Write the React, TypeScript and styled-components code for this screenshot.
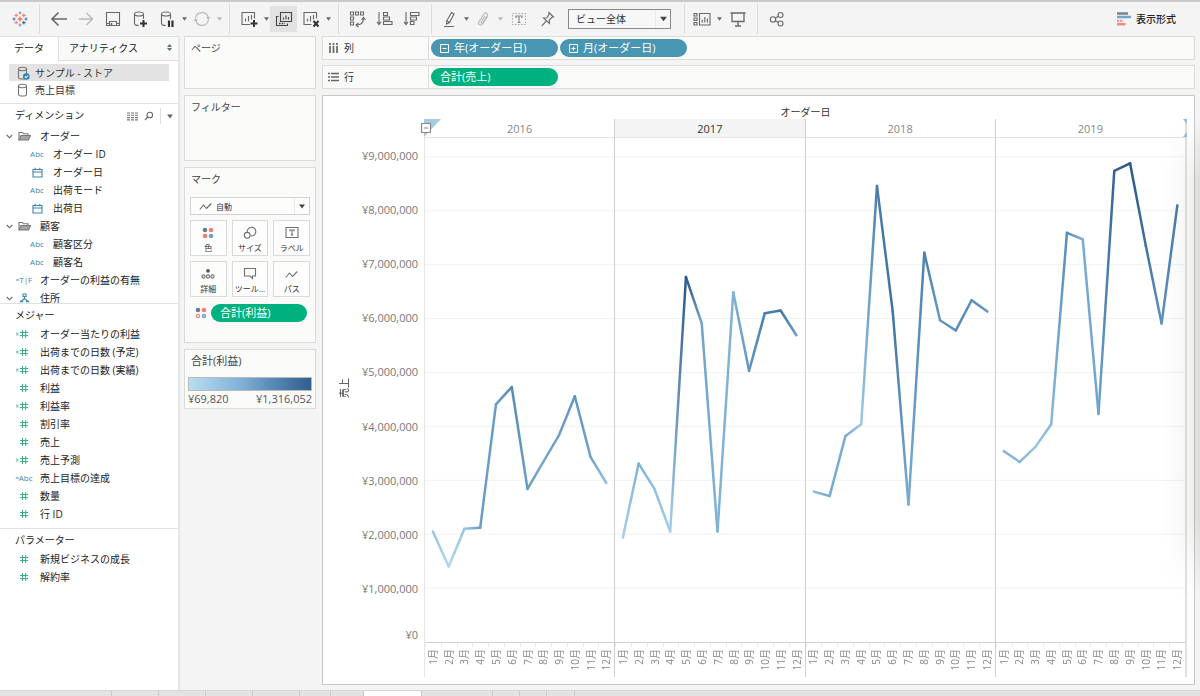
import React from "react";
import styled, { createGlobalStyle, css } from "styled-components";

const Global = createGlobalStyle`
  *, *::before, *::after { box-sizing: border-box; }
  body {
    margin: 0;
    background: #f4f4f4;
    color: #333;
    font: 10px/18px "Open Sans", "Noto Sans CJK JP", sans-serif;
  }
  button, select { font: inherit; color: inherit; }
  h2, ul { margin: 0; padding: 0; font-size: inherit; font-weight: 400; list-style: none; }
`;

/* ---------- page frame ---------- */

const Page = styled.div`
  position: relative;
  display: flex;
  flex-direction: column;
  min-height: 100vh;
  overflow: hidden;
  border-top: 2px solid #cacaca;
`;

const Workspace = styled.div`
  display: flex;
  flex: 1;
`;

const WindowShade = styled.div`
  position: absolute;
  top: 118px;
  right: 0;
  bottom: 98px;
  width: 36px;
  pointer-events: none;
  background: linear-gradient(to right, rgba(90, 90, 80, 0), rgba(90, 90, 80, 0.05) 60%, rgba(90, 90, 80, 0.14));
  mask-image: linear-gradient(transparent, #000 12%, #000 84%, transparent);
`;

/* ---------- toolbar ---------- */

const Toolbar = styled.header`
  display: flex;
  align-items: center;
  height: 34px;
  padding: 2px 24px 2px 1px;
`;

const Group = styled.div<{ $first?: boolean; $spaced?: boolean }>`
  display: flex;
  align-items: center;
  gap: ${(p) => (p.$spaced ? 1 : 0)}px;
  height: 30px;
  padding: 0 6px 0 5px;
  border-left: ${(p) => (p.$first ? "0" : "1px solid #dcdcdc")};
`;

const ToolButton = styled.button<{ $narrow?: boolean; $active?: boolean; $muted?: boolean }>`
  display: flex;
  align-items: center;
  justify-content: center;
  width: ${(p) => (p.$narrow ? 24 : 27)}px;
  height: 26px;
  padding: 0;
  border: 0;
  background: ${(p) => (p.$active ? "#e2e2e2" : "transparent")};
  color: ${(p) => (p.$muted ? "#b8b8b8" : "#686868")};
`;

const CaretButton = styled.button<{ $muted?: boolean }>`
  display: flex;
  align-items: center;
  justify-content: center;
  width: 8px;
  height: 26px;
  padding: 0;
  border: 0;
  background: none;
  color: ${(p) => (p.$muted ? "#b8b8b8" : "#686868")};
`;

const SelectBox = styled.div<{ $marks?: boolean }>`
  position: relative;
  display: flex;
  align-items: center;
  height: ${(p) => (p.$marks ? 18 : 20)}px;
  width: ${(p) => (p.$marks ? "100%" : "103px")};
  margin: ${(p) => (p.$marks ? "0" : "0 13px 0 2px")};
  border: 1px solid ${(p) => (p.$marks ? "#d2d2d2" : "#8a8a8a")};
  background: ${(p) => (p.$marks ? "#fdfdfd" : "#f7f7f7")};
  color: #666;
  select {
    appearance: none;
    width: 100%;
    height: 100%;
    border: 0;
    outline: 0;
    background: none;
    font-size: ${(p) => (p.$marks ? 8 : 10)}px;
    padding: 0 16px 0 ${(p) => (p.$marks ? 25 : 7)}px;
    color: #333;
  }
`;

const SelectCaret = styled.span`
  position: absolute;
  top: 0;
  right: 0;
  bottom: 0;
  display: flex;
  align-items: center;
  justify-content: center;
  width: 15px;
  border-left: 1px solid #e8e8e8;
  color: #444;
  pointer-events: none;
`;

const SelectGlyph = styled.span`
  position: absolute;
  left: 8px;
  display: flex;
  pointer-events: none;
`;

const ShowMe = styled.button`
  display: flex;
  align-items: center;
  gap: 5px;
  margin-left: auto;
  padding: 0;
  border: 0;
  background: none;
  font-weight: 500;
  color: #222;
`;

/* ---------- data pane ---------- */

const Sidebar = styled.aside`
  width: 180px;
  flex: none;
  background: #fff;
  border-right: 2px solid #e6e6e6;
`;

const PaneTabs = styled.div`
  display: flex;
  height: 25px;
`;

const PaneTab = styled.button<{ $current?: boolean }>`
  display: flex;
  align-items: center;
  justify-content: space-between;
  height: 25px;
  border: 0;
  color: #222;
  ${(p) =>
    p.$current
      ? css`
          width: 58px;
          padding: 0 0 2px 14px;
          background: #fff;
          border-top: 1px solid #e0e0e0;
        `
      : css`
          flex: 1;
          padding: 0 6px 2px 10px;
          background: #f9f9f8;
          border: 1px solid #dedede;
          border-right: 0;
        `}
`;

const Sources = styled.ul`
  padding: 3px 9px 5px;
`;

const Source = styled.li<{ $selected?: boolean }>`
  display: flex;
  align-items: center;
  gap: 5px;
  height: 17px;
  padding-left: 8px;
  background: ${(p) => (p.$selected ? "#e3e3e3" : "transparent")};
`;

const Section = styled.section`
  border-top: 1px solid #e2e2e2;
`;

const SectionHead = styled.div`
  display: flex;
  align-items: center;
  justify-content: space-between;
  height: 21px;
  padding-left: 15px;
  color: #222;
`;

const HeadTools = styled.div`
  display: flex;
  align-items: center;
  gap: 6px;
  padding: 3px 5px 0 0;
`;

const HeadButton = styled.button<{ $split?: boolean }>`
  display: flex;
  align-items: center;
  height: 16px;
  padding: 0 0 0 ${(p) => (p.$split ? 6 : 0)}px;
  border: 0;
  border-left: ${(p) => (p.$split ? "1px solid #dedede" : "0")};
  background: none;
  color: #666;
`;

const Fields = styled.ul<{ $capped?: boolean }>`
  padding-bottom: 5px;
  ${(p) =>
    p.$capped &&
    css`
      max-height: 178px;
      padding: 2px 0 0;
    `}
`;

const Field = styled.li<{ $nested?: boolean }>`
  display: flex;
  align-items: center;
  height: 18px;
  padding-left: ${(p) => (p.$nested ? 16 : 3)}px;
  line-height: 14px;
  white-space: nowrap;
  color: #222;
`;

const Chevron = styled.span`
  display: flex;
  justify-content: center;
  width: 12px;
  color: #666;
`;

const FieldIcon = styled.span<{ $measure?: boolean }>`
  display: flex;
  align-items: center;
  justify-content: center;
  width: 18px;
  margin-right: 7px;
  font-size: 8px;
  color: ${(p) => (p.$measure ? "#3dab86" : "#3d86ad")};
`;

const CalcMark = styled.span`
  font-size: 6px;
`;

/* ---------- cards and shelves ---------- */

const Cards = styled.div`
  display: flex;
  flex-direction: column;
  gap: 6px;
  width: 142px;
  flex: none;
  padding: 0 6px 6px 4px;
`;

const Card = styled.section<{ $min: number }>`
  min-height: ${(p) => p.$min}px;
  padding: 2px 5px 0;
  border: 1px solid #dadada;
  background: #fafaf9;
  color: #444;
`;

const CardTitle = styled.h2<{ $large?: boolean }>`
  padding-left: 1px;
  font-size: ${(p) => (p.$large ? 11 : 10)}px;
`;

const MarkSelectRow = styled.div`
  padding-top: 9px;
`;

const MarkTools = styled.div`
  display: grid;
  grid-template-columns: repeat(3, 1fr);
  gap: 5px;
  margin: 5px 0 6px;
`;

const MarkButton = styled.button`
  display: flex;
  flex-direction: column;
  align-items: center;
  justify-content: flex-end;
  gap: 2px;
  height: 36px;
  padding: 0;
  border: 1px solid #dadada;
  background: #fdfdfd;
  font-size: 8px;
  line-height: 14px;
  color: #333;
  svg { color: #707070; }
`;

const MarkPillRow = styled.div`
  display: flex;
  align-items: center;
  gap: 4px;
  padding: 1px 3px 0 5px;
`;

const Pill = styled.button<{ $measure?: boolean; $fill?: boolean }>`
  display: flex;
  align-items: center;
  gap: 5px;
  ${(p) => (p.$fill ? "flex: 1;" : "width: 127px;")}
  height: 18px;
  padding: 0 9px;
  border: 0;
  border-radius: 9px;
  background: ${(p) => (p.$measure ? "#00b180" : "#4996b2")};
  font-size: 11px;
  line-height: 18px;
  color: #fff;
`;

const LegendBar = styled.div`
  height: 14px;
  margin: 7px -2px 0;
  border: 1px solid #b9b9b9;
  background: linear-gradient(to right, #b9ddf1, #84b4d8 40%, #4f81b0 75%, #335d8e);
`;

const LegendRange = styled.div`
  display: flex;
  justify-content: space-between;
  margin: 0 -2px;
  font-size: 11px;
  line-height: 16px;
  color: #555;
`;

const Main = styled.main`
  display: flex;
  flex: 1;
  flex-direction: column;
  gap: 5px;
  min-width: 0;
  padding: 0 5px 5px 0;
`;

const Shelf = styled.div`
  display: flex;
  align-items: center;
  height: 24px;
  border: 1px solid #dcdcdc;
  background: #fafaf9;
`;

const ShelfName = styled.div`
  display: flex;
  align-items: center;
  gap: 5px;
  width: 106px;
  height: 100%;
  padding-left: 5px;
  border-right: 1px solid #dcdcdc;
  color: #333;
  svg { color: #666; }
`;

const ShelfPills = styled.div`
  display: flex;
  gap: 2px;
  padding-left: 2px;
`;

/* ---------- view ---------- */

const View = styled.section`
  display: flex;
  flex: 1;
  margin-top: 1px;
  padding: 7px 7px 7px 0;
  border: 1px solid #c8c8c8;
  background: #fff;
`;

const AxisTitle = styled.div`
  align-self: center;
  width: 14px;
  margin: 0 0 4px 14px;
  writing-mode: vertical-rl;
  text-orientation: sideways;
  transform: rotate(180deg);
  line-height: 14px;
  color: #333;
`;

const AxisLabels = styled.div`
  display: grid;
  grid-template-rows: minmax(0, 0.35fr) repeat(9, minmax(0, 1fr));
  width: 73px;
  padding: 34px 6px 34px 0;
  font-size: 11px;
  line-height: 16px;
  text-align: right;
  color: #777;
`;

const AxisLabel = styled.span<{ $last?: boolean }>`
  align-self: end;
  margin-bottom: ${(p) => (p.$last ? 0 : -8)}px;
`;

const Plot = styled.div`
  position: relative;
  display: flex;
  flex: 1;
  flex-direction: column;
  min-width: 0;
`;

const PlotTitle = styled.h2`
  height: 16px;
  line-height: 18px;
  text-align: center;
  color: #333;
`;

const Panes = styled.div`
  display: grid;
  flex: 1;
  grid-template-columns: repeat(4, minmax(0, 1fr));
  border-right: 2px solid #e0e0e0;
`;

const Pane = styled.div<{ $first?: boolean }>`
  display: flex;
  flex-direction: column;
  border-left: 1px solid ${(p) => (p.$first ? "#e6e6e6" : "#cfcfcf")};
`;

const PaneHead = styled.div<{ $hover?: boolean }>`
  height: 19px;
  border-bottom: 1px solid #e2e2e2;
  background: ${(p) => (p.$hover ? "#f4f4f4" : "transparent")};
  font-size: 11px;
  line-height: 19px;
  text-align: center;
  color: ${(p) => (p.$hover ? "#333" : "#888")};
`;

const PaneChart = styled.svg`
  display: block;
  flex: 1 1 0;
  width: 100%;
  min-height: 200px;
  overflow: visible;
`;

const Months = styled.div`
  display: grid;
  grid-template-columns: repeat(12, minmax(0, 1fr));
  height: 35px;
  border-top: 1px solid #d2d2d2;
`;

const Month = styled.span`
  display: flex;
  justify-content: center;
  padding-top: 6px;
  background: linear-gradient(#ececec, #ececec) no-repeat 0 0 / 1px 4px;
  line-height: 14px;
  color: #888;
  span {
    height: max-content;
    writing-mode: vertical-rl;
    text-orientation: sideways;
    transform: rotate(180deg);
  }
`;

const CornerMark = styled.svg<{ $end?: boolean }>`
  position: absolute;
  top: 16px;
  ${(p) => (p.$end ? "right: 0;" : "left: 0;")}
`;

const Collapse = styled.button`
  position: absolute;
  top: 20px;
  left: -3px;
  display: flex;
  padding: 0;
  border: 0;
  background: #fff;
  color: #888;
`;

/* ---------- sheet tabs ---------- */

const SheetTabs = styled.footer`
  display: flex;
  height: 6px;
  border-top: 1px solid #d6d6d6;
  background: #e3e3e3;
`;

const SheetTab = styled.button<{ $w: number; $current?: boolean }>`
  width: ${(p) => p.$w}px;
  padding: 0;
  border: 0;
  border-right: 1px solid #c8c8c8;
  background: ${(p) => (p.$current ? "#fff" : "transparent")};
`;

/* ---------- icons ---------- */

const Svg = ({ w = 18, h = 18, children }: { w?: number; h?: number; children: React.ReactNode }) => (
  <svg width={w} height={h} viewBox={`0 0 ${w} ${h}`} fill="none" stroke="currentColor" strokeWidth="1.1" aria-hidden="true">
    {children}
  </svg>
);

const Caret = ({ size = 5 }: { size?: number }) => (
  <svg width={size} height={size - 1} viewBox="0 0 6 4" aria-hidden="true">
    <path d="M0 0h6L3 4z" fill="currentColor" />
  </svg>
);

const plus = (x: number, y: number, r: number) => `M${x - r} ${y}h${2 * r}M${x} ${y - r}v${2 * r}`;

const Logo = () => (
  <Svg w={16} h={16}>
    <path d={plus(8, 8, 2.4)} stroke="#e8745c" strokeWidth="1.3" />
    <path d={plus(4.2, 4.4, 1.8) + plus(4.2, 11.6, 1.8)} stroke="#ef8a7a" />
    <path d={plus(11.8, 4.4, 1.8)} stroke="#f0806e" />
    <path d={plus(11.8, 11.6, 1.8)} stroke="#3f6798" />
    <path d={plus(8, 2, 1.5) + plus(8, 14, 1.5)} stroke="#6a9cc4" />
    <path d={plus(2, 8, 1.4) + plus(14, 8, 1.4)} stroke="#4c6c9a" />
  </Svg>
);

const Back = () => (
  <Svg>
    <path d="M17 9H2.500M8.500 2.500L2 9l6.500 6.500" strokeWidth="1.6" />
  </Svg>
);
const Forward = () => (
  <Svg>
    <path d="M2 9h13.500M9.500 3L15.500 9l-6 6" strokeWidth="1.3" />
  </Svg>
);
const Save = () => (
  <Svg>
    <path d="M2.500 2.500h13v13h-13zM5.500 15.500v-4h7v4M2.500 13.500h3M12.500 13.500h3" />
    <path d="M7.500 13v2.500" strokeWidth="1.6" />
  </Svg>
);
const cylinder = "M3.500 4v9.500c0 1.200 1.900 2 4.300 2M12.500 4v5M3.500 4c0-1.200 2-2 4.500-2s4.500.8 4.500 2-2 2-4.500 2-4.500-.8-4.500-2z";
const DbAdd = () => (
  <Svg>
    <path d={cylinder} />
    <path d="M9 13.500h7M12.500 10v7" strokeWidth="2" stroke="#333" />
  </Svg>
);
const DbPause = () => (
  <Svg>
    <path d={cylinder} />
    <path d="M11 10.500v6.500M14.500 10.500v6.500" strokeWidth="2.200" stroke="#333" />
  </Svg>
);
const Refresh = () => (
  <Svg>
    <path d="M2.600 8A6.500 6.500 0 0 1 15.300 7.500M15.400 10A6.500 6.500 0 0 1 2.700 10.500" />
    <path d="M13.200 7h4L15.500 10zM.8 11L2.700 8l2.100 3z" fill="currentColor" stroke="none" />
  </Svg>
);
const NewSheet = () => (
  <Svg>
    <path d="M14.500 8.500V2.500h-12.500v12h8M5.500 11.500v-3M8.500 11.500V6M11.500 9.500V5" />
    <path d="M10.500 13.500h7M14 10v7" strokeWidth="2" stroke="#333" />
  </Svg>
);
const Duplicate = () => (
  <Svg>
    <path d="M5.500 2.500h11v9h-11zM8.500 9.500v-2M11 9.500v-4M13.500 9.500V7" stroke="#444" />
    <path d="M3.500 6.500h-2v9h11v-2" stroke="#444" />
    <path d="M4 13.500h6" strokeDasharray="1.500 1.200" stroke="#444" strokeWidth="1.600" />
  </Svg>
);
const ClearSheet = () => (
  <Svg>
    <path d="M14.500 8.500V2.500h-12.500v12h7.500M5.500 11.500v-3M8.500 11.500V6M11.500 9.500V5" />
    <path d="M11.500 11l5 5.500M16.500 11l-5 5.500" strokeWidth="2" stroke="#333" />
  </Svg>
);
const Swap = () => (
  <Svg>
    <path d="M1.500 2h3v3h-3zM6.500 2h3v3h-3zM11.500 2h3v3h-3zM1.500 7h3v3h-3zM1.500 12h3v3h-3z" />
    <path d="M7.500 15c4 0 6.800-2 7-6.500M12.500 10l2-2.500 2 2.500M9.500 12.800L7 15l2.500 2" />
  </Svg>
);
const SortAsc = () => (
  <Svg>
    <path d="M3 2v12M1 11.800L3 14.500l2-2.700" />
    <path d="M7.500 2.500h4v3h-4zM7.500 7h6v3h-6zM7.500 11.500h8.500v3h-8.500z" />
  </Svg>
);
const SortDesc = () => (
  <Svg>
    <path d="M3 2v12M1 11.800L3 14.500l2-2.700" />
    <path d="M7.500 2.500h8.500v3h-8.500zM7.500 7h6v3h-6zM7.500 11.500h3.500v3h-3.500z" />
  </Svg>
);
const Marker = () => (
  <Svg>
    <path d="M11.500 2.500l2.500 1.500-4.500 8.500-3 1.500.3-3.200zM6.800 10.800l2.700 1.700M4 16.500h10" />
  </Svg>
);
const Clip = () => (
  <Svg>
    <path d="M13.500 6.500l-5 7.500c-1.600 2.300-5 .5-3.600-2.200l5.200-8c1.400-2 4.400-.3 3.200 1.900l-4.600 7c-.7 1-2 .2-1.400-.9l3.700-5.800" />
  </Svg>
);
const LabelT = () => (
  <Svg>
    <path d="M2.500 3.500h13v11h-13z" strokeDasharray="1.500 1.500" stroke="#aaa" />
    <path d="M6 8V6h6v2M9 6v6.500M7.500 12.500h3" stroke="#888" strokeWidth="1.200" />
  </Svg>
);
const Pin = () => (
  <Svg>
    <path d="M11 2.500l4.500 4.500-1.500.3-2.700 2.700.2 3.500-6-5.500 3.500-.2 2-3.500zM8.300 10.800l-4.500 5" />
  </Svg>
);
const CardsIcon = () => (
  <Svg>
    <path d="M1 3.500h3v2.500h-3zM1 8h3v2.500h-3zM1 12.500h3v2.500h-3zM6.500 3.500h10.500v11.500h-10.500zM9.200 12.500v-3M11.800 12.500V7M14.400 12.500v-4" />
  </Svg>
);
const Present = () => (
  <Svg>
    <path d="M1.500 3h15M3 3v8.500h12V3M9 11.500v4M6 16h6" strokeWidth="1.300" />
  </Svg>
);
const Share = () => (
  <Svg>
    <circle cx="5" cy="9.500" r="2.700" />
    <circle cx="12.500" cy="5" r="2.500" />
    <circle cx="12.500" cy="13.500" r="2.500" />
    <path d="M7.300 8.200l3-1.900M7.300 10.800l3 1.600" />
  </Svg>
);
const ShowMeIcon = () => (
  <Svg w={14} h={14}>
    <path d="M0 1.500h11" stroke="#7c828c" strokeWidth="2.500" />
    <path d="M0 5h14" stroke="#7ba4cc" strokeWidth="2.500" />
    <path d="M0 8.700h6" stroke="#f4897e" strokeWidth="2" strokeDasharray="2 .8" />
    <path d="M0 12.200h8.500" stroke="#f4897e" strokeWidth="2.500" />
  </Svg>
);
const Cylinder = ({ checked }: { checked?: boolean }) => (
  <Svg w={13} h={14}>
    <path d="M1.500 3v8.500c0 1 1.700 1.500 4 1.500s4-.5 4-1.500V3M1.500 3c0-1 1.700-1.700 4-1.700S9.500 2 9.500 3s-1.700 1.700-4 1.700S1.500 4 1.500 3z" stroke="#777" />
    {checked && (
      <>
        <circle cx="9.300" cy="10.500" r="3.300" fill="#2b83b3" stroke="none" />
        <path d="M7.800 10.500l1.200 1.200 2-2.200" stroke="#fff" />
      </>
    )}
  </Svg>
);
const Grid = () => (
  <Svg w={11} h={9}>
    <path d="M0 1h11M0 3.300h11M0 5.600h11M0 7.900h11" strokeDasharray="3 1" stroke="#777" />
  </Svg>
);
const Search = () => (
  <Svg w={10} h={10}>
    <circle cx="5.800" cy="4" r="2.800" />
    <path d="M3.800 6L1 9" />
  </Svg>
);
const ChevronDown = () => (
  <Svg w={7} h={5}>
    <path d="M.8 1l2.700 2.800L6.200 1" />
  </Svg>
);
const Folder = () => (
  <Svg w={13} h={10}>
    <path d="M1 9V1.500h3.500l1 1.300h4.500V4.500" stroke="#777" />
    <path d="M3 4.500h9.500L10.500 9H1z" fill="#a3a6a8" stroke="#777" />
  </Svg>
);
const Calendar = () => (
  <Svg w={11} h={11}>
    <path d="M1 2.500h9v7.500h-9zM1 5h9M3.200 .8v2.500M7.800 .8v2.500" />
  </Svg>
);
const Hierarchy = () => (
  <Svg w={11} h={10}>
    <path d="M4 1h3v2.500h-3zM5.500 3.500v2.500M5.500 5.500L2.500 8M5.500 5.500l3 2.500" />
    <path d="M.8 8.500h3.400M6.800 8.500h3.400" strokeWidth="1.500" />
  </Svg>
);
const Hash = ({ calc }: { calc?: boolean }) => (
  <Svg w={18} h={10}>
    <path d="M7.500 1v8M10.700 1v8M4.900 3.500h8.300M4.900 6.600h8.300" strokeWidth="1" />
    {calc && <path d="M1.200 4.200h2.300M1.200 5.900h2.300" strokeWidth=".9" />}
  </Svg>
);
const ColorDots = ({ rings }: { rings?: boolean }) => (
  <Svg w={12} h={12}>
    <circle cx="3" cy="3" r="2.300" fill="#70788a" stroke="none" />
    <circle cx="9" cy="3" r="2.300" fill="#f47f73" stroke="none" />
    {rings ? (
      <>
        <circle cx="3" cy="9" r="1.700" stroke="#f47f73" />
        <circle cx="9" cy="9" r="1.700" stroke="#6d9fc9" fill="#a9c6e0" />
      </>
    ) : (
      <>
        <circle cx="3" cy="9" r="2.300" fill="#f47f73" stroke="none" />
        <circle cx="9" cy="9" r="2.300" fill="#6d9fc9" stroke="none" />
      </>
    )}
  </Svg>
);
const SizeIcon = () => (
  <Svg w={14} h={13}>
    <path d="M4.300 6.200a4.300 4.300 0 1 1 3.700 3.600" />
    <circle cx="4.200" cy="9.300" r="2.900" />
  </Svg>
);
const TextIcon = () => (
  <Svg w={14} h={13}>
    <path d="M1 1.500h12v10h-12zM4.800 5.200V4h4.400v1.200M7 4v5M5.800 9h2.400" />
  </Svg>
);
const DetailIcon = () => (
  <Svg w={14} h={12}>
    <circle cx="7" cy="2.800" r="1.900" fill="#555" stroke="none" />
    <circle cx="2.500" cy="8.500" r="1.600" />
    <circle cx="7" cy="8.500" r="1.600" />
    <circle cx="11.500" cy="8.500" r="1.600" />
  </Svg>
);
const TooltipIcon = () => (
  <Svg w={14} h={13}>
    <path d="M1.500 1.500h11v7.500h-3v2.500L7 9H1.500z" />
  </Svg>
);
const LineIcon = () => (
  <Svg w={13} h={11}>
    <path d="M.8 8.500l3.700-4.500 3 3.500L12.300 2.500" />
  </Svg>
);
const BoxSign = ({ add, size = 9 }: { add?: boolean; size?: number }) => (
  <svg width={size} height={size} viewBox="0 0 9 9" fill="none" stroke="currentColor" aria-hidden="true">
    <path d={`M.5 .5h8v8h-8zM2.500 4.500h4${add ? "M4.500 2.500v4" : ""}`} />
  </svg>
);
const ColumnsIcon = () => (
  <Svg w={11} h={10}>
    <path d="M2 0v2M2 3v7M5.500 0v2M5.500 3v7M9 0v2M9 3v7" strokeWidth="1.700" />
  </Svg>
);
const RowsIcon = () => (
  <Svg w={11} h={10}>
    <path d="M0 1.500h2M3 1.500h8M0 5h2M3 5h8M0 8.500h2M3 8.500h8" strokeWidth="1.500" />
  </Svg>
);
const Spinner = () => (
  <svg width="5" height="7" viewBox="0 0 5 7" fill="#5b6f86" aria-hidden="true">
    <path d="M0 3l2.500-3L5 3zM0 4h5L2.500 7z" />
  </svg>
);

/* ---------- data ---------- */

type FieldKind = "folder" | "abc" | "date" | "tf" | "geo" | "num" | "calcNum" | "calcAbc";

const kindIcon: Record<FieldKind, React.ReactNode> = {
  folder: <Folder />,
  abc: "Abc",
  date: <Calendar />,
  tf: (
    <>
      <CalcMark>=</CalcMark>T|F
    </>
  ),
  geo: <Hierarchy />,
  num: <Hash />,
  calcNum: <Hash calc />,
  calcAbc: (
    <>
      <CalcMark>=</CalcMark>Abc
    </>
  ),
};

type FieldRow = { name: string; kind: FieldKind; nested?: boolean };

const dimensions: FieldRow[] = [
  { name: "オーダー", kind: "folder" },
  { name: "オーダー ID", kind: "abc", nested: true },
  { name: "オーダー日", kind: "date", nested: true },
  { name: "出荷モード", kind: "abc", nested: true },
  { name: "出荷日", kind: "date", nested: true },
  { name: "顧客", kind: "folder" },
  { name: "顧客区分", kind: "abc", nested: true },
  { name: "顧客名", kind: "abc", nested: true },
  { name: "オーダーの利益の有無", kind: "tf" },
  { name: "住所", kind: "geo" },
];

const measures: FieldRow[] = [
  { name: "オーダー当たりの利益", kind: "calcNum" },
  { name: "出荷までの日数 (予定)", kind: "calcNum" },
  { name: "出荷までの日数 (実績)", kind: "calcNum" },
  { name: "利益", kind: "num" },
  { name: "利益率", kind: "calcNum" },
  { name: "割引率", kind: "num" },
  { name: "売上", kind: "num" },
  { name: "売上予測", kind: "calcNum" },
  { name: "売上目標の達成", kind: "calcAbc" },
  { name: "数量", kind: "num" },
  { name: "行 ID", kind: "num" },
];

const parameters: FieldRow[] = [
  { name: "新規ビジネスの成長", kind: "num" },
  { name: "解約率", kind: "num" },
];

/* sales in millions of yen; profit as its share of the colour range */
const years = [
  {
    year: "2016",
    sales: [2.05, 1.4, 2.1, 2.12, 4.41, 4.73, 2.84, 3.34, 3.84, 4.56, 3.43, 2.95],
    profit: [0.2, 0.05, 0.2, 0.5, 0.5, 0.62, 0.5, 0.42, 0.48, 0.55, 0.45, 0.25],
  },
  {
    year: "2017",
    sales: [1.94, 3.31, 2.84, 2.05, 6.77, 5.91, 2.05, 6.49, 5.03, 6.1, 6.15, 5.69],
    profit: [0.12, 0.35, 0.25, 0.12, 1, 0.45, 0.35, 0.35, 0.55, 0.72, 0.78, 0.5],
  },
  {
    year: "2018",
    sales: [2.79, 2.71, 3.82, 4.04, 8.46, 6.13, 2.55, 7.22, 5.97, 5.78, 6.34, 6.13],
    profit: [0.3, 0.4, 0.4, 0.18, 0.72, 0.8, 0.4, 0.7, 0.52, 0.62, 0.6, 0.55],
  },
  {
    year: "2019",
    sales: [3.54, 3.34, 3.62, 4.04, 7.59, 7.47, 4.23, 8.74, 8.88, 7.35, 5.91, 8.1],
    profit: [0.35, 0.3, 0.2, 0.3, 0.62, 0.4, 0.45, 0.92, 1, 0.8, 0.58, 0.75],
  },
];

const monthNames = Array.from({ length: 12 }, (_, i) => `${i + 1}月`);
const axisTicks = [9, 8, 7, 6, 5, 4, 3, 2, 1, 0];

const ramp = [
  [185, 221, 241],
  [132, 180, 216],
  [79, 133, 180],
  [42, 87, 135],
];

const shade = (t: number) => {
  const pos = Math.min(t, 0.999) * 3;
  const i = Math.floor(pos);
  const mix = ramp[i].map((c, k) => Math.round(c + (ramp[i + 1][k] - c) * (pos - i)));
  return `rgb(${mix.join(",")})`;
};

const TOP = 935;

function YearChart({ year, sales, profit }: (typeof years)[number]) {
  const pts = sales.map((v, i) => ({ x: i * 10 + 5, y: TOP - v * 100 }));
  return (
    <PaneChart viewBox={`0 0 120 ${TOP}`} preserveAspectRatio="none" role="img" aria-label={year}>
      <defs>
        {pts.slice(1).map((p, i) => (
          <linearGradient key={i} id={`g${year}-${i}`} gradientUnits="userSpaceOnUse" x1={pts[i].x} y1={pts[i].y} x2={p.x} y2={p.y}>
            <stop offset="0" stopColor={shade(profit[i])} />
            <stop offset="1" stopColor={shade(profit[i + 1])} />
          </linearGradient>
        ))}
      </defs>
      {axisTicks.slice(0, 9).map((t) => (
        <line key={t} x1="0" x2="120" y1={TOP - t * 100} y2={TOP - t * 100} stroke="#f3f3f3" vectorEffect="non-scaling-stroke" shapeRendering="crispEdges" />
      ))}
      {pts.slice(1).map((p, i) => (
        <line
          key={i}
          x1={pts[i].x}
          y1={pts[i].y}
          x2={p.x}
          y2={p.y}
          stroke={`url(#g${year}-${i})`}
          strokeWidth="2.500"
          strokeLinecap="round"
          vectorEffect="non-scaling-stroke"
        />
      ))}
    </PaneChart>
  );
}

function FieldList({ rows, capped }: { rows: FieldRow[]; capped?: boolean }) {
  return (
    <Fields $capped={capped}>
      {rows.map((f) => (
        <Field key={f.name} $nested={f.nested}>
          <Chevron>{(f.kind === "folder" || f.kind === "geo") && <ChevronDown />}</Chevron>
          <FieldIcon $measure={f.kind === "num" || f.kind === "calcNum"}>{kindIcon[f.kind]}</FieldIcon>
          {f.name}
        </Field>
      ))}
    </Fields>
  );
}

const Tool = ({ label, ...p }: { label: string; narrow?: boolean; active?: boolean; muted?: boolean; children: React.ReactNode }) => (
  <ToolButton type="button" aria-label={label} $narrow={p.narrow} $active={p.active} $muted={p.muted}>
    {p.children}
  </ToolButton>
);

const Drop = ({ label, muted }: { label: string; muted?: boolean }) => (
  <CaretButton type="button" aria-label={label} $muted={muted}>
    <Caret />
  </CaretButton>
);

const markTools: [string, React.ReactNode][] = [
  ["色", <ColorDots />],
  ["サイズ", <SizeIcon />],
  ["ラベル", <TextIcon />],
  ["詳細", <DetailIcon />],
  ["ツール...", <TooltipIcon />],
  ["パス", <LineIcon />],
];

const sheetWidths = [112, 47, 47, 47, 47, 31, 33, 58, 71, 27, 27, 28];

export default function App() {
  return (
    <Page>
      <Global />
      <Toolbar>
        <Group $first>
          <Tool label="スタート"><Logo /></Tool>
        </Group>
        <Group>
          <Tool label="元に戻す"><Back /></Tool>
          <Tool label="やり直し" muted><Forward /></Tool>
          <Tool label="保存"><Save /></Tool>
          <Tool label="新しいデータソース"><DbAdd /></Tool>
          <Tool label="自動更新の一時停止"><DbPause /></Tool>
          <Drop label="自動更新メニュー" />
          <Tool label="更新" muted><Refresh /></Tool>
          <Drop label="更新メニュー" muted />
        </Group>
        <Group>
          <Tool label="新しいワークシート"><NewSheet /></Tool>
          <Drop label="ワークシートメニュー" />
          <Tool label="複製" active><Duplicate /></Tool>
          <Tool label="シートのクリア"><ClearSheet /></Tool>
          <Drop label="クリアメニュー" />
        </Group>
        <Group>
          <Tool label="行と列の交換"><Swap /></Tool>
          <Tool label="昇順で並べ替え"><SortAsc /></Tool>
          <Tool label="降順で並べ替え"><SortDesc /></Tool>
        </Group>
        <Group $spaced>
          <Tool label="ハイライト" narrow><Marker /></Tool>
          <Drop label="ハイライトメニュー" />
          <Tool label="グループ" narrow muted><Clip /></Tool>
          <Drop label="グループメニュー" muted />
          <Tool label="マークラベル"><LabelT /></Tool>
          <Tool label="軸の固定"><Pin /></Tool>
        </Group>
        <SelectBox>
          <select aria-label="適合" defaultValue="ビュー全体">
            <option>ビュー全体</option>
          </select>
          <SelectCaret><Caret size={7} /></SelectCaret>
        </SelectBox>
        <Group $spaced>
          <Tool label="カードの表示" narrow><CardsIcon /></Tool>
          <Drop label="カードメニュー" />
          <Tool label="プレゼンテーション"><Present /></Tool>
        </Group>
        <Group>
          <Tool label="共有"><Share /></Tool>
        </Group>
        <ShowMe type="button">
          <ShowMeIcon />
          表示形式
        </ShowMe>
      </Toolbar>

      <Workspace>
        <Sidebar>
          <PaneTabs>
            <PaneTab type="button" $current>データ</PaneTab>
            <PaneTab type="button">
              アナリティクス
              <Spinner />
            </PaneTab>
          </PaneTabs>
          <Sources>
            <Source $selected>
              <Cylinder checked />
              サンプル - ストア
            </Source>
            <Source>
              <Cylinder />
              売上目標
            </Source>
          </Sources>
          <Section>
            <SectionHead>
              <h2>ディメンション</h2>
              <HeadTools>
                <HeadButton type="button" aria-label="データの表示"><Grid /></HeadButton>
                <HeadButton type="button" aria-label="検索"><Search /></HeadButton>
                <HeadButton type="button" aria-label="ディメンションメニュー" $split><Caret size={6} /></HeadButton>
              </HeadTools>
            </SectionHead>
            <FieldList rows={dimensions} capped />
          </Section>
          <Section>
            <SectionHead><h2>メジャー</h2></SectionHead>
            <FieldList rows={measures} />
          </Section>
          <Section>
            <SectionHead><h2>パラメーター</h2></SectionHead>
            <FieldList rows={parameters} />
          </Section>
        </Sidebar>

        <Cards>
          <Card $min={53}><CardTitle>ページ</CardTitle></Card>
          <Card $min={66}><CardTitle>フィルター</CardTitle></Card>
          <Card $min={176}>
            <CardTitle>マーク</CardTitle>
            <MarkSelectRow>
              <SelectBox $marks>
                <SelectGlyph><LineIcon /></SelectGlyph>
                <select aria-label="マークタイプ" defaultValue="自動">
                  <option>自動</option>
                </select>
                <SelectCaret><Caret size={6} /></SelectCaret>
              </SelectBox>
            </MarkSelectRow>
            <MarkTools>
              {markTools.map(([name, icon]) => (
                <MarkButton key={name} type="button">
                  {icon}
                  {name}
                </MarkButton>
              ))}
            </MarkTools>
            <MarkPillRow>
              <ColorDots rings />
              <Pill type="button" $measure $fill>合計(利益)</Pill>
            </MarkPillRow>
          </Card>
          <Card $min={60}>
            <CardTitle $large>合計(利益)</CardTitle>
            <LegendBar />
            <LegendRange>
              <span>¥69,820</span>
              <span>¥1,316,052</span>
            </LegendRange>
          </Card>
        </Cards>

        <Main>
          <Shelf>
            <ShelfName><ColumnsIcon />列</ShelfName>
            <ShelfPills>
              <Pill type="button"><BoxSign />年(オーダー日)</Pill>
              <Pill type="button"><BoxSign add />月(オーダー日)</Pill>
            </ShelfPills>
          </Shelf>
          <Shelf>
            <ShelfName><RowsIcon />行</ShelfName>
            <ShelfPills>
              <Pill type="button" $measure>合計(売上)</Pill>
            </ShelfPills>
          </Shelf>
          <View>
            <AxisTitle>売上</AxisTitle>
            <AxisLabels>
              {axisTicks.map((t) => (
                <AxisLabel key={t} $last={t === 0}>{t ? `¥${t},000,000` : "¥0"}</AxisLabel>
              ))}
            </AxisLabels>
            <Plot>
              <PlotTitle>オーダー日</PlotTitle>
              <Panes>
                {years.map((y, i) => (
                  <Pane key={y.year} $first={i === 0}>
                    <PaneHead $hover={y.year === "2017"}>{y.year}</PaneHead>
                    <YearChart {...y} />
                    <Months>
                      {monthNames.map((m) => (
                        <Month key={m}><span>{m}</span></Month>
                      ))}
                    </Months>
                  </Pane>
                ))}
              </Panes>
              <CornerMark width="17" height="18" viewBox="0 0 17 18" aria-hidden="true">
                <path d="M0 0h17L0 18z" fill="#a5cae2" />
              </CornerMark>
              <CornerMark $end width="4" height="18" viewBox="0 0 4 18" aria-hidden="true">
                <path d="M0 0h4v5zM4 13v5H0z" fill="#8fbcd9" />
              </CornerMark>
              <Collapse type="button" aria-label="折りたたむ"><BoxSign size={10} /></Collapse>
            </Plot>
          </View>
        </Main>
      </Workspace>

      <SheetTabs>
        {sheetWidths.map((w, i) => (
          <SheetTab key={i} type="button" aria-label={`シート ${i + 1}`} $w={w} $current={i === 7} />
        ))}
      </SheetTabs>
      <WindowShade />
    </Page>
  );
}
